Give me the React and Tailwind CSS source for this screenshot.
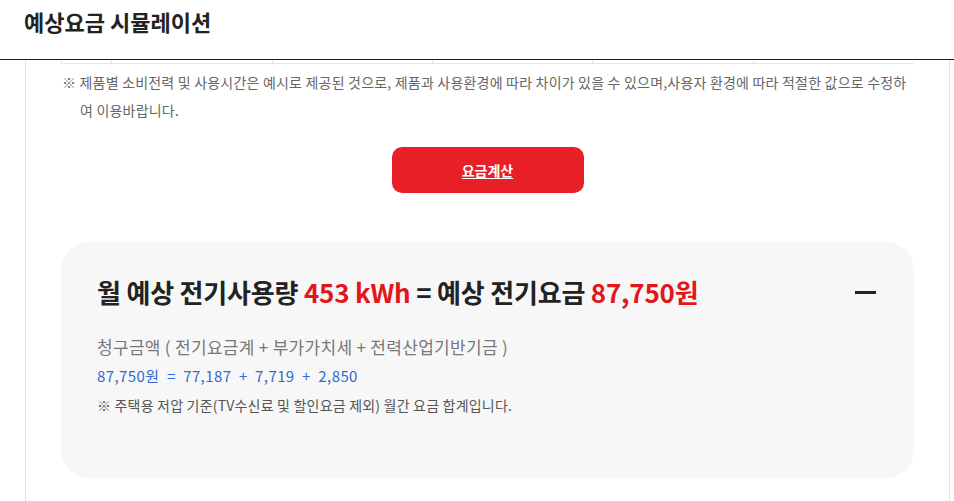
export default function App() {
  const cols = ["w-[50px]", "w-[161px]", "w-[160px]", "w-[160px]", "w-[161px]", "flex-1"];

  return (
    <div className="w-[954px] h-[501px] overflow-hidden bg-white font-['Noto_Sans_CJK_KR','Noto_Sans',sans-serif] text-[#222]">
      {/* header */}
      <header className="h-[60px] border-b border-[#222] pl-[24px] pt-[5px]">
        <h1 className="text-[22px] font-bold leading-[32px]">예상요금 시뮬레이션</h1>
      </header>

      {/* card */}
      <div className="ml-[25px] w-[925px] h-[460px] border-x border-b border-[#e3e3e3] rounded-b-[12px] px-[35px]">
        {/* table tail */}
        <div className="flex h-[4px] border-b border-[#e6e6e6]">
          {cols.map((c, i) => (
            <div key={i} className={`${c} border-l border-[#e6e6e6]`} />
          ))}
        </div>

        <p className="mt-[4px] pl-[19px] -indent-[18px] text-[14px] leading-[28px] text-[#666] tracking-[0.2px] break-all">
          ※ 제품별 소비전력 및 사용시간은 예시로 제공된 것으로, 제품과 사용환경에 따라 차이가 있을 수 있으며,사용자 환경에 따라 적절한 값으로 수정하여 이용바랍니다.
        </p>

        <div className="mt-[23px] flex justify-center">
          <button className="w-[192px] h-[46px] rounded-[10px] bg-[#e81f26] text-white text-[14px] font-bold underline underline-offset-2">
            요금계산
          </button>
        </div>

        {/* result */}
        <div className="mt-[49px] h-[236px] rounded-[28px] bg-[#f7f7f7] pl-[36px] pr-[38px] pt-[31px]">
          <div className="flex items-center justify-between">
            <h2 className="text-[26px] font-bold leading-[38px] tracking-[-0.2px]">
              월 예상 전기사용량 <span className="text-[#e3161c]">453 kWh</span> = 예상 전기요금{" "}
              <span className="text-[#e3161c]">87,750원</span>
            </h2>
            <span className="block w-[21px] h-[3px] bg-[#222]" />
          </div>
          <p className="mt-[23px] text-[17px] leading-[26px] text-[#777] tracking-[0.3px]">
            청구금액 ( 전기요금계 + 부가가치세 + 전력산업기반기금 )
          </p>
          <p className="mt-[3px] text-[15px] leading-[26px] text-[#2f6bd1] tracking-[0.4px] whitespace-pre">
            {"87,750원  =  77,187  +  7,719  +  2,850"}
          </p>
          <p className="mt-[3px] text-[14px] leading-[26px] text-[#555] tracking-[0.2px]">
            ※ 주택용 저압 기준(TV수신료 및 할인요금 제외) 월간 요금 합계입니다.
          </p>
        </div>
      </div>
    </div>
  );
}
